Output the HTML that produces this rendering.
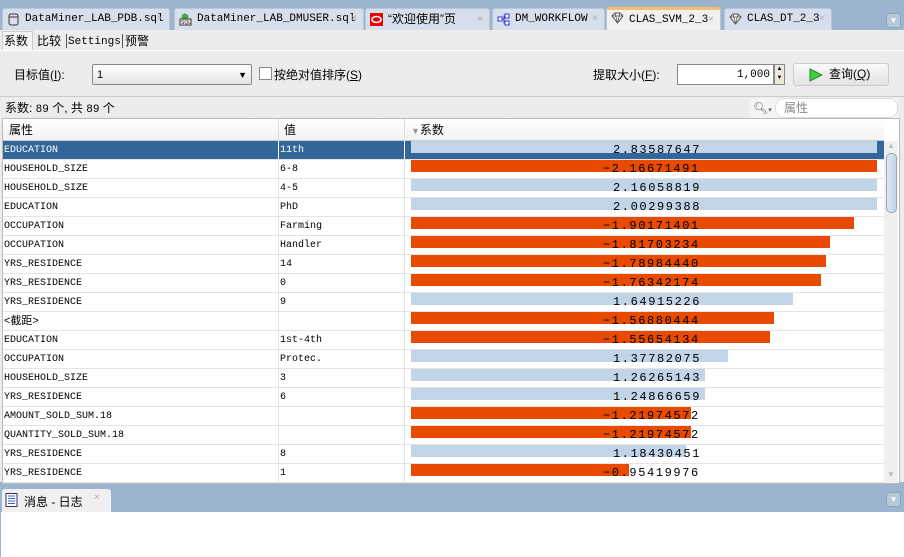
<!DOCTYPE html>
<html><head><meta charset="utf-8"><style>
*{box-sizing:border-box;margin:0;padding:0}
body{width:904px;height:557px;overflow:hidden;background:#9cb4d0;font-family:"Liberation Sans","Noto Sans CJK SC",sans-serif;font-size:12px;position:relative;color:#000}
.a{position:absolute}
.tab{position:absolute;top:8px;height:22px;background:#d6dfeb;border:1px solid #b8c6d8;border-bottom:none;border-radius:3px 3px 0 0;font-family:"Liberation Mono","Noto Sans CJK SC",monospace;font-size:11px;line-height:21px;padding-left:22px;white-space:nowrap}
.tab .x{position:absolute;right:6px;top:0;color:#aab;font-size:10px}
.tab .ic{position:absolute;left:4px;top:4px;width:13px;height:13px}
.mono{font-family:"Liberation Mono","Noto Sans CJK SC",monospace;font-size:10px}
.row{position:absolute;left:3px;width:881px;height:19px;border-bottom:1px solid #e4e4e4;background:#fff}
.row div{position:absolute;top:0;line-height:19px;white-space:nowrap}
.c1{left:1px}.c2{left:277px}
.sep{position:absolute;top:0;width:1px;height:19px;background:#e4e4e4}
.bar{position:absolute;top:3px;height:12px;left:408px}
.v{font-family:"Liberation Mono",monospace;font-size:12px;letter-spacing:1.6px;line-height:18px}
</style></head><body>
<div class="tab" style="left:2px;width:168px"><svg class="ic" viewBox="0 0 13 13"><rect x="2" y="1" width="9" height="11" rx="2" fill="#dde" stroke="#334"/><line x1="2" y1="4" x2="11" y2="4" stroke="#334"/></svg>DataMiner_LAB_PDB.sql<span class="x">×</span></div>
<div class="tab" style="left:174px;width:190px"><svg class="ic" viewBox="0 0 13 13"><circle cx="6" cy="4" r="3.5" fill="#4a4"/><rect x="1" y="6" width="11" height="6" fill="#fff" stroke="#333"/><text x="2" y="11" font-size="5" font-family="Liberation Sans">SQL</text></svg>DataMiner_LAB_DMUSER.sql<span class="x">×</span></div>
<div class="tab" style="left:365px;width:125px;font-family:'Liberation Sans','Noto Sans CJK SC',sans-serif;font-size:12px"><svg class="ic" viewBox="0 0 13 13"><rect x="0" y="0" width="13" height="13" fill="#e00"/><ellipse cx="6.5" cy="6.5" rx="4.5" ry="3" fill="none" stroke="#fff" stroke-width="1.6"/></svg>“欢迎使用”页<span class="x">×</span></div>
<div class="tab" style="left:492px;width:113px"><svg class="ic" viewBox="0 0 13 13" fill="#fff" stroke="#33c"><rect x="1" y="4" width="4" height="4"/><rect x="8" y="1" width="4" height="4"/><rect x="8" y="8" width="4" height="4"/><path d="M5 6h2V3h1M7 6v4h1"/></svg>DM_WORKFLOW<span class="x">×</span></div>
<div class="tab" style="left:606px;width:115px;top:7px;height:24px;background:#f0f0f0;border-top:3px solid #f5c16e"><svg class="ic" viewBox="0 0 13 13" style="top:2px"><path d="M1 4l3-3h5l3 3-5.5 7z" fill="#eee" stroke="#555"/><path d="M1 4h11M4 1l2.5 10M9 1l-2.5 10" stroke="#555" fill="none" stroke-width=".7"/></svg>CLAS_SVM_2_3<span class="x">×</span></div>
<div class="tab" style="left:724px;width:108px"><svg class="ic" viewBox="0 0 13 13"><path d="M1 4l3-3h5l3 3-5.5 7z" fill="#eee" stroke="#555"/><path d="M1 4h11M4 1l2.5 10M9 1l-2.5 10" stroke="#555" fill="none" stroke-width=".7"/></svg>CLAS_DT_2_3<span class="x">×</span></div>
<div class="a" style="left:886px;top:13px;width:15px;height:15px;background:#b8c8dc;border:1px solid #8aa;border-radius:3px;color:#fff;font-size:8px;text-align:center;line-height:14px">▼</div>
<div class="a" style="left:0;top:30px;width:904px;height:452px;background:#ececec"></div>
<div class="a" style="left:2px;top:31px;width:31px;height:20px;background:#f5f5f5;border:1px solid #ccc;border-bottom:none"></div>
<div class="a" style="left:4px;top:32px;line-height:18px;font-size:12px">系数</div>
<div class="a" style="left:37px;top:32px;line-height:18px;font-size:12px">比较</div>
<div class="a" style="left:66px;top:34px;width:1px;height:14px;background:#555"></div>
<div class="a" style="left:68px;top:32px;line-height:18px;font-size:11px" ><span class="mono" style="font-size:11px">Settings</span></div>
<div class="a" style="left:122px;top:34px;width:1px;height:14px;background:#555"></div>
<div class="a" style="left:125px;top:32px;line-height:18px;font-size:12px">预警</div>
<div class="a" style="left:0;top:50px;width:904px;height:1px;background:#fff"></div>
<div class="a" style="left:14px;top:66px;font-size:12px">目标值(<u>I</u>):</div>
<div class="a" style="left:92px;top:64px;width:160px;height:21px;border:1px solid #888;border-radius:2px;background:linear-gradient(#fff,#e4e4e4);font-size:11px;padding-left:4px;line-height:20px">1<span style="position:absolute;right:4px;font-size:9px">▼</span></div>
<div class="a" style="left:259px;top:67px;width:13px;height:13px;border:1px solid #888;background:#fff"></div>
<div class="a" style="left:274px;top:66px;font-size:12px">按绝对值排序(<u>S</u>)</div>
<div class="a" style="left:593px;top:66px;font-size:12px">提取大小(<u>F</u>):</div>
<div class="a" style="left:677px;top:64px;width:97px;height:21px;border:1px solid #888;background:#fff;font-size:11px;text-align:right;padding-right:3px;line-height:19px" ><span class="mono" style="font-size:11px">1,000</span></div>
<div class="a" style="left:774px;top:64px;width:11px;height:21px;border:1px solid #888;background:#ece8dc;font-size:6px;line-height:9px;text-align:center">▲<br>▼</div>
<div class="a" style="left:793px;top:63px;width:96px;height:23px;border:1px solid #ccc;border-radius:3px;background:linear-gradient(#fafafa,#e2e2e2);font-size:12px;line-height:21px;padding-left:35px"><svg class="a" style="left:15px;top:4px" width="14" height="14"><path d="M1 1l12 6-12 6z" fill="#4c4" stroke="#282"/></svg>查询(<u>Q</u>)</div>
<div class="a" style="left:0;top:96px;width:904px;height:1px;background:#ccc"></div>
<div class="a" style="left:5px;top:99px;font-size:12px;line-height:18px">系数: <span class="mono" style="font-size:11px">89</span> 个, 共 <span class="mono" style="font-size:11px">89</span> 个</div>
<div class="a" style="left:750px;top:98px;width:148px;height:20px;background:#f4f4f4"></div>
<div class="a" style="left:753px;top:101px;color:#666;font-size:12px">🔍︎<span style="font-size:7px">▾</span></div>
<div class="a" style="left:775px;top:98px;width:123px;height:20px;border:1px solid #ddd;border-radius:9px;background:#fff;color:#888;padding-left:8px;line-height:18px">属性</div>
<div class="a" style="left:2px;top:118px;width:898px;height:366px;background:#fff;border:1px solid #bbb"></div>
<div class="a" style="left:3px;top:119px;width:881px;height:22px;background:linear-gradient(#fff,#f2f2f2);border-bottom:1px solid #ccc"></div>
<div class="a" style="left:9px;top:121px;font-size:12px;line-height:18px">属性</div>
<div class="a" style="left:278px;top:119px;width:1px;height:22px;background:#ddd"></div>
<div class="a" style="left:284px;top:121px;font-size:12px;line-height:18px">值</div>
<div class="a" style="left:404px;top:119px;width:1px;height:22px;background:#ddd"></div>
<div class="a" style="left:411px;top:121px;font-size:12px;line-height:18px"><span style="color:#999;font-size:9px">▼</span>系数</div>
<div class="a" style="left:884px;top:141px;width:14px;height:342px;background:#f0f0f0"></div>
<div class="a" style="left:886px;top:153px;width:11px;height:60px;border:1px solid #9ab;border-radius:5px;background:linear-gradient(90deg,#dde7f2,#c4d4e6)"></div>
<div class="a" style="left:887px;top:141px;color:#bbb;font-size:8px">▲</div>
<div class="a" style="left:887px;top:470px;color:#bbb;font-size:8px">▼</div>
<div id="rows"></div>
<div class="a" style="left:2px;top:489px;width:109px;height:24px;background:#f0f0f0;border-radius:3px 3px 0 0"></div>
<svg class="a" style="left:5px;top:493px" width="14" height="14"><rect x="1" y="0.5" width="11" height="13" fill="#fff" stroke="#336"/><path d="M3 3h7M3 5.5h7M3 8h7M3 10.5h7" stroke="#36c"/></svg>
<div class="a" style="left:24px;top:493px;font-size:12px">消息 - 日志</div>
<div class="a" style="left:94px;top:492px;color:#aaa;font-size:10px">×</div>
<div class="a" style="left:886px;top:492px;width:15px;height:15px;background:#b8c8dc;border:1px solid #8aa;border-radius:3px;color:#fff;font-size:8px;text-align:center;line-height:14px">▼</div>
<div class="a" style="left:0;top:512px;width:904px;height:45px;background:#fff;border-left:1px solid #9cb4d0"></div>
<script>
var d=[["EDUCATION","11th","2.83587647",877,0],["HOUSEHOLD_SIZE","6-8","-2.16671491",877,1],["HOUSEHOLD_SIZE","4-5","2.16058819",877,0],["EDUCATION","PhD","2.00299388",877,0],["OCCUPATION","Farming","-1.90171401",854,1],["OCCUPATION","Handler","-1.81703234",830,1],["YRS_RESIDENCE","14","-1.78984440",826,1],["YRS_RESIDENCE","0","-1.76342174",821,1],["YRS_RESIDENCE","9","1.64915226",793,0],["<截距>","","-1.56880444",774,1],["EDUCATION","1st-4th","-1.55654134",770,1],["OCCUPATION","Protec.","1.37782075",728,0],["HOUSEHOLD_SIZE","3","1.26265143",705,0],["YRS_RESIDENCE","6","1.24866659",705,0],["AMOUNT_SOLD_SUM.18","","-1.21974572",691,1],["QUANTITY_SOLD_SUM.18","","-1.21974572",691,1],["YRS_RESIDENCE","8","1.18430451",686,0],["YRS_RESIDENCE","1","-0.95419976",629,1]];
var h="";
d.forEach(function(r,i){var t=141+i*19,sel=i==0;
var a=r[0].replace("<","&lt;").replace(">","&gt;");
h+='<div class="row" style="top:'+t+'px;'+(sel?'background:#336699;color:#fff':'')+'">'+
'<div class="c1 mono" '+(r[0][0]=="<"?'style="font-family:Liberation Sans,Noto Sans CJK SC;font-size:11px"':'')+'>'+a+'</div>'+
'<div class="sep" style="left:275px;'+(sel?'background:#fff':'')+'"></div><div class="c2 mono">'+r[1]+'</div>'+
'<div class="sep" style="left:401px;'+(sel?'background:#fff':'')+'"></div>'+
'<div class="bar" style="width:'+(r[3]-411)+'px;background:'+(r[4]?'#e84a00':'#c2d4e8')+'"></div>'+
'<div class="v" style="left:'+(r[4]?600:610)+'px;color:#000">'+r[2].replace("-","−")+'</div></div>';});
document.getElementById("rows").innerHTML=h;
</script>
</body></html>
